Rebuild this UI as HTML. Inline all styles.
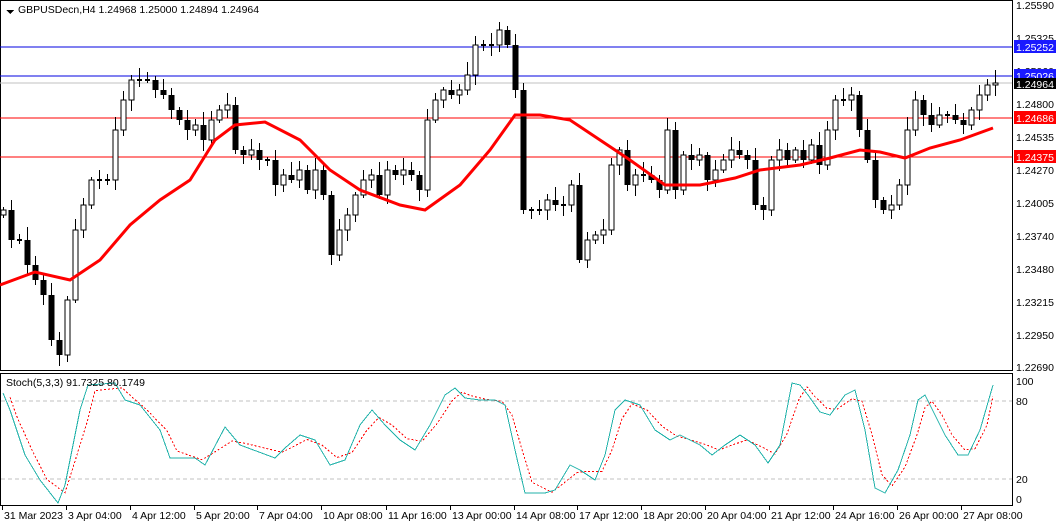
<!DOCTYPE html>
<html><head><meta charset="utf-8"><style>
body{margin:0;background:#fff;width:1058px;height:527px;overflow:hidden;font-family:"Liberation Sans",sans-serif}
svg{position:absolute;left:0;top:0}
svg text{font-family:"Liberation Sans",sans-serif;font-size:10.5px}
</style></head><body>
<svg id="s" width="1058" height="527" xmlns="http://www.w3.org/2000/svg" shape-rendering="crispEdges">
<rect x="0" y="0" width="1058" height="527" fill="#fff"/>
<rect x="0.5" y="0.5" width="1012" height="370" fill="none" stroke="#000"/>
<rect x="0.5" y="373.5" width="1012" height="132" fill="none" stroke="#000"/>
<line x1="0" y1="47" x2="1012" y2="47" stroke="#0000e0"/>
<line x1="0" y1="76" x2="1012" y2="76" stroke="#0000e0"/>
<line x1="0" y1="83" x2="1012" y2="83" stroke="#c0c0c0"/>
<line x1="0" y1="118" x2="1012" y2="118" stroke="#f00"/>
<line x1="0" y1="157" x2="1012" y2="157" stroke="#f00"/>
<line x1="1" y1="401" x2="1012" y2="401" stroke="#c0c0c0" stroke-dasharray="4,3"/>
<line x1="1" y1="479" x2="1012" y2="479" stroke="#c0c0c0" stroke-dasharray="4,3"/>
<g id="candles"></g>
<polyline id="ma" fill="none" stroke="#f00" stroke-width="3" shape-rendering="auto" points="0,285 35,272 70,280 100,260 130,225 160,200 190,180 215,140 235,125 265,122 300,140 330,170 360,190 400,205 425,210 460,185 490,150 515,115 540,115 570,120 600,140 630,160 665,185 700,185 735,178 760,170 800,165 830,158 860,150 880,152 905,158 930,148 960,140 993,128"/>
<polyline id="sig" fill="none" stroke="#f00" stroke-width="1" stroke-dasharray="2,2"/>
<polyline id="st" fill="none" stroke="#20b2aa" stroke-width="1" points="3,393 10,410 25,455 40,480 58,503 65,485 80,410 88,385 115,383 125,400 140,405 160,430 170,458 195,458 205,465 225,427 240,445 275,458 285,448 300,435 315,440 330,465 345,460 360,425 372,410 385,425 400,440 415,450 430,425 445,395 455,388 465,398 480,400 495,400 505,405 515,450 525,493 545,493 555,490 570,465 580,470 595,480 605,455 615,410 625,400 640,405 655,430 670,440 680,435 700,445 712,455 725,445 740,435 755,445 768,463 780,445 792,383 800,385 808,395 820,412 830,415 845,395 855,390 865,430 875,488 885,493 898,470 910,435 918,400 925,395 935,415 945,435 958,455 968,455 980,430 993,385"/>
<path d="M6,10 L14,10 L10,14 Z" fill="#000"/>
<text x="18" y="13" fill="#000">GBPUSDecn,H4  1.24968 1.25000 1.24894 1.24964</text>
<text x="6" y="386" fill="#000">Stoch(5,3,3) 91.7325 80.1749</text>
<g fill="#000">
<text x="1016" y="9">1.25590</text><text x="1016" y="42">1.25325</text><text x="1016" y="75">1.25060</text><text x="1016" y="108">1.24800</text><text x="1016" y="141">1.24535</text><text x="1016" y="174">1.24270</text><text x="1016" y="207">1.24005</text><text x="1016" y="240">1.23740</text><text x="1016" y="273">1.23480</text><text x="1016" y="306">1.23215</text><text x="1016" y="339">1.22950</text><text x="1016" y="371">1.22690</text>
<text x="1016" y="385">100</text><text x="1016" y="405">80</text><text x="1016" y="483">20</text><text x="1016" y="503">0</text>
</g>
<rect x="1014" y="40" width="42" height="13" fill="#1a1aff"/><text x="1016" y="51" fill="#fff">1.25252</text>
<rect x="1014" y="69" width="42" height="13" fill="#1a1aff"/><text x="1016" y="80" fill="#fff">1.25026</text>
<rect x="1014" y="78" width="42" height="11" fill="#000"/><text x="1016" y="88" fill="#fff">1.24964</text>
<rect x="1014" y="111" width="42" height="13" fill="#f00"/><text x="1016" y="122" fill="#fff">1.24686</text>
<rect x="1014" y="150" width="42" height="13" fill="#f00"/><text x="1016" y="161" fill="#fff">1.24375</text>
<g id="tl" fill="#000"></g>
</svg>
<script>
var c=[210,240,240,265,280,295,340,355,300,230,205,180,180,180,130,100,80,80,80,90,95,110,120,130,125,140,120,110,105,150,155,150,160,160,185,175,180,170,190,170,195,255,230,215,195,180,175,195,170,175,170,175,190,120,100,90,95,90,75,45,45,45,30,45,90,210,210,210,200,205,205,185,260,240,235,230,165,150,185,175,175,180,190,130,190,155,160,155,180,170,160,150,155,160,205,210,160,150,160,150,160,145,165,130,100,100,95,130,160,200,210,205,185,130,100,115,125,115,115,120,125,110,95,85,83];
var g=document.getElementById('candles'),h='';
for(var i=0;i<c.length;i++){var x=3+i*8,o=i?c[i-1]:215,cl=c[i];
var t=Math.min(o,cl),b=Math.max(o,cl),hi=t-3-((i*7)%11),lo=b+3+((i*5)%9);
h+='<line x1="'+(x+.5)+'" y1="'+hi+'" x2="'+(x+.5)+'" y2="'+lo+'" stroke="#000"/>';
if(b-t<1)h+='<line x1="'+(x-2)+'" y1="'+t+'" x2="'+(x+3)+'" y2="'+t+'" stroke="#000" stroke-width="2"/>';
else if(cl<o)h+='<rect x="'+(x-2)+'" y="'+t+'" width="5" height="'+(b-t)+'" fill="#fff" stroke="#000"/>';
else h+='<rect x="'+(x-2.5)+'" y="'+t+'" width="6" height="'+(b-t)+'" fill="#000"/>';}
g.innerHTML=h;
var p=document.getElementById('st').getAttribute('points').split(' ').map(function(s){var a=s.split(',');return [+a[0]+7,+a[1]];});
var q=p.map(function(v,i){var a=p[Math.max(0,i-1)][1],b=p[Math.min(p.length-1,i+1)][1];return Math.min(v[0],993)+','+((a+2*v[1]+b)/4);});
document.getElementById('sig').setAttribute('points',q.join(' '));
var L=[[2,'31 Mar 2023'],[66,'3 Apr 04:00'],[130,'4 Apr 12:00'],[194,'5 Apr 20:00'],[257,'7 Apr 04:00'],[321,'10 Apr 08:00'],[386,'11 Apr 16:00'],[450,'13 Apr 00:00'],[514,'14 Apr 08:00'],[577,'17 Apr 12:00'],[641,'18 Apr 20:00'],[705,'20 Apr 04:00'],[769,'21 Apr 12:00'],[833,'24 Apr 16:00'],[897,'26 Apr 00:00'],[961,'27 Apr 08:00']];
var s='';L.forEach(function(l){s+='<line x1="'+(l[0]+.5)+'" y1="506" x2="'+(l[0]+.5)+'" y2="510" stroke="#000"/><text x="'+(l[0]+2)+'" y="519">'+l[1]+'</text>';});
document.getElementById('tl').innerHTML=s;
</script>
</body></html>
